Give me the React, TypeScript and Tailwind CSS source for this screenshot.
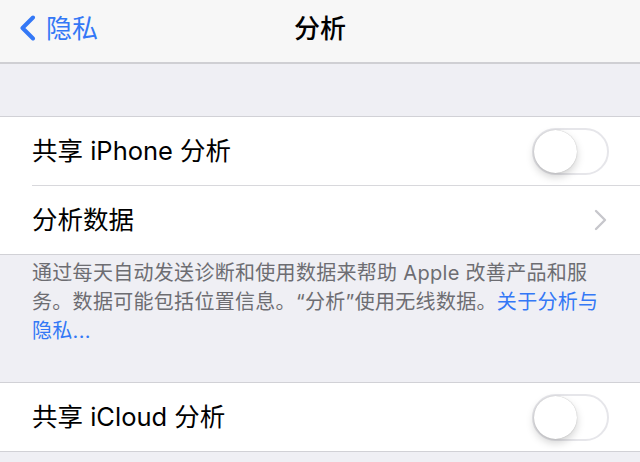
const font = "font-['Inter','Noto_Sans_CJK_SC',sans-serif]";

function Toggle() {
  return (
    <div className="relative w-[77px] h-[47px] rounded-full border-[2px] border-[#e6e6ea] bg-white">
      <div className="absolute left-0 top-0 w-[43px] h-[43px] rounded-full bg-white shadow-[0_4px_8px_rgba(0,0,0,0.18),0_0_1px_rgba(0,0,0,0.3)]" />
    </div>
  );
}

function Chevron() {
  return (
    <svg width="14" height="22" viewBox="0 0 14 22" fill="none">
      <path d="M3 2l9 9-9 9" stroke="#c7c7cc" strokeWidth="2.4" strokeLinecap="round" strokeLinejoin="round" />
    </svg>
  );
}

function Row({ label, right }: { label: string; right: React.ReactNode }) {
  return (
    <div className="h-[68px] flex items-center justify-between pl-[32px] pr-[31px]">
      <span className="text-[25.5px] text-black">{label}</span>
      {right}
    </div>
  );
}

export default function App() {
  return (
    <div className={`w-[640px] h-[462px] overflow-hidden bg-[#efeff4] ${font}`}>
      {/* Nav bar */}
      <div className="h-[64px] bg-[#f7f7f7] border-b-2 border-[#cfcfd3] grid grid-cols-[1fr_auto_1fr] items-center pb-[6px]">
        <div className="flex items-center pl-[19px] text-[#3478f6]">
          <svg width="18" height="26" viewBox="0 0 18 26" fill="none">
            <path d="M14 2.5L3.5 13 14 23.5" stroke="#3478f6" strokeWidth="4" strokeLinecap="round" strokeLinejoin="round" />
          </svg>
          <span className="ml-[9px] text-[26px]">隐私</span>
        </div>
        <div className="text-[26px] text-black font-medium">分析</div>
        <div />
      </div>

      <div className="h-[52px]" />

      <div className="bg-white border-y border-[#d1d1d6]">
        <Row label="共享 iPhone 分析" right={<Toggle />} />
        <div className="ml-[32px] h-px bg-[#d8d8dc]" />
        <Row label="分析数据" right={<div className="pr-[2px]"><Chevron /></div>} />
      </div>

      <div className="h-[127px] px-[32px] pt-[4px] text-[20px] leading-[29px] text-[#6d6d72] tracking-[0.3px]">
        通过每天自动发送诊断和使用数据来帮助 Apple 改善产品和服
        <br />
        务。数据可能包括位置信息。“分析”使用无线数据。
        <span className="text-[#3478f6]">关于分析与</span>
        <br />
        <span className="text-[#3478f6]">隐私...</span>
      </div>

      <div className="bg-white border-y border-[#d1d1d6]">
        <Row label="共享 iCloud 分析" right={<Toggle />} />
      </div>
    </div>
  );
}
